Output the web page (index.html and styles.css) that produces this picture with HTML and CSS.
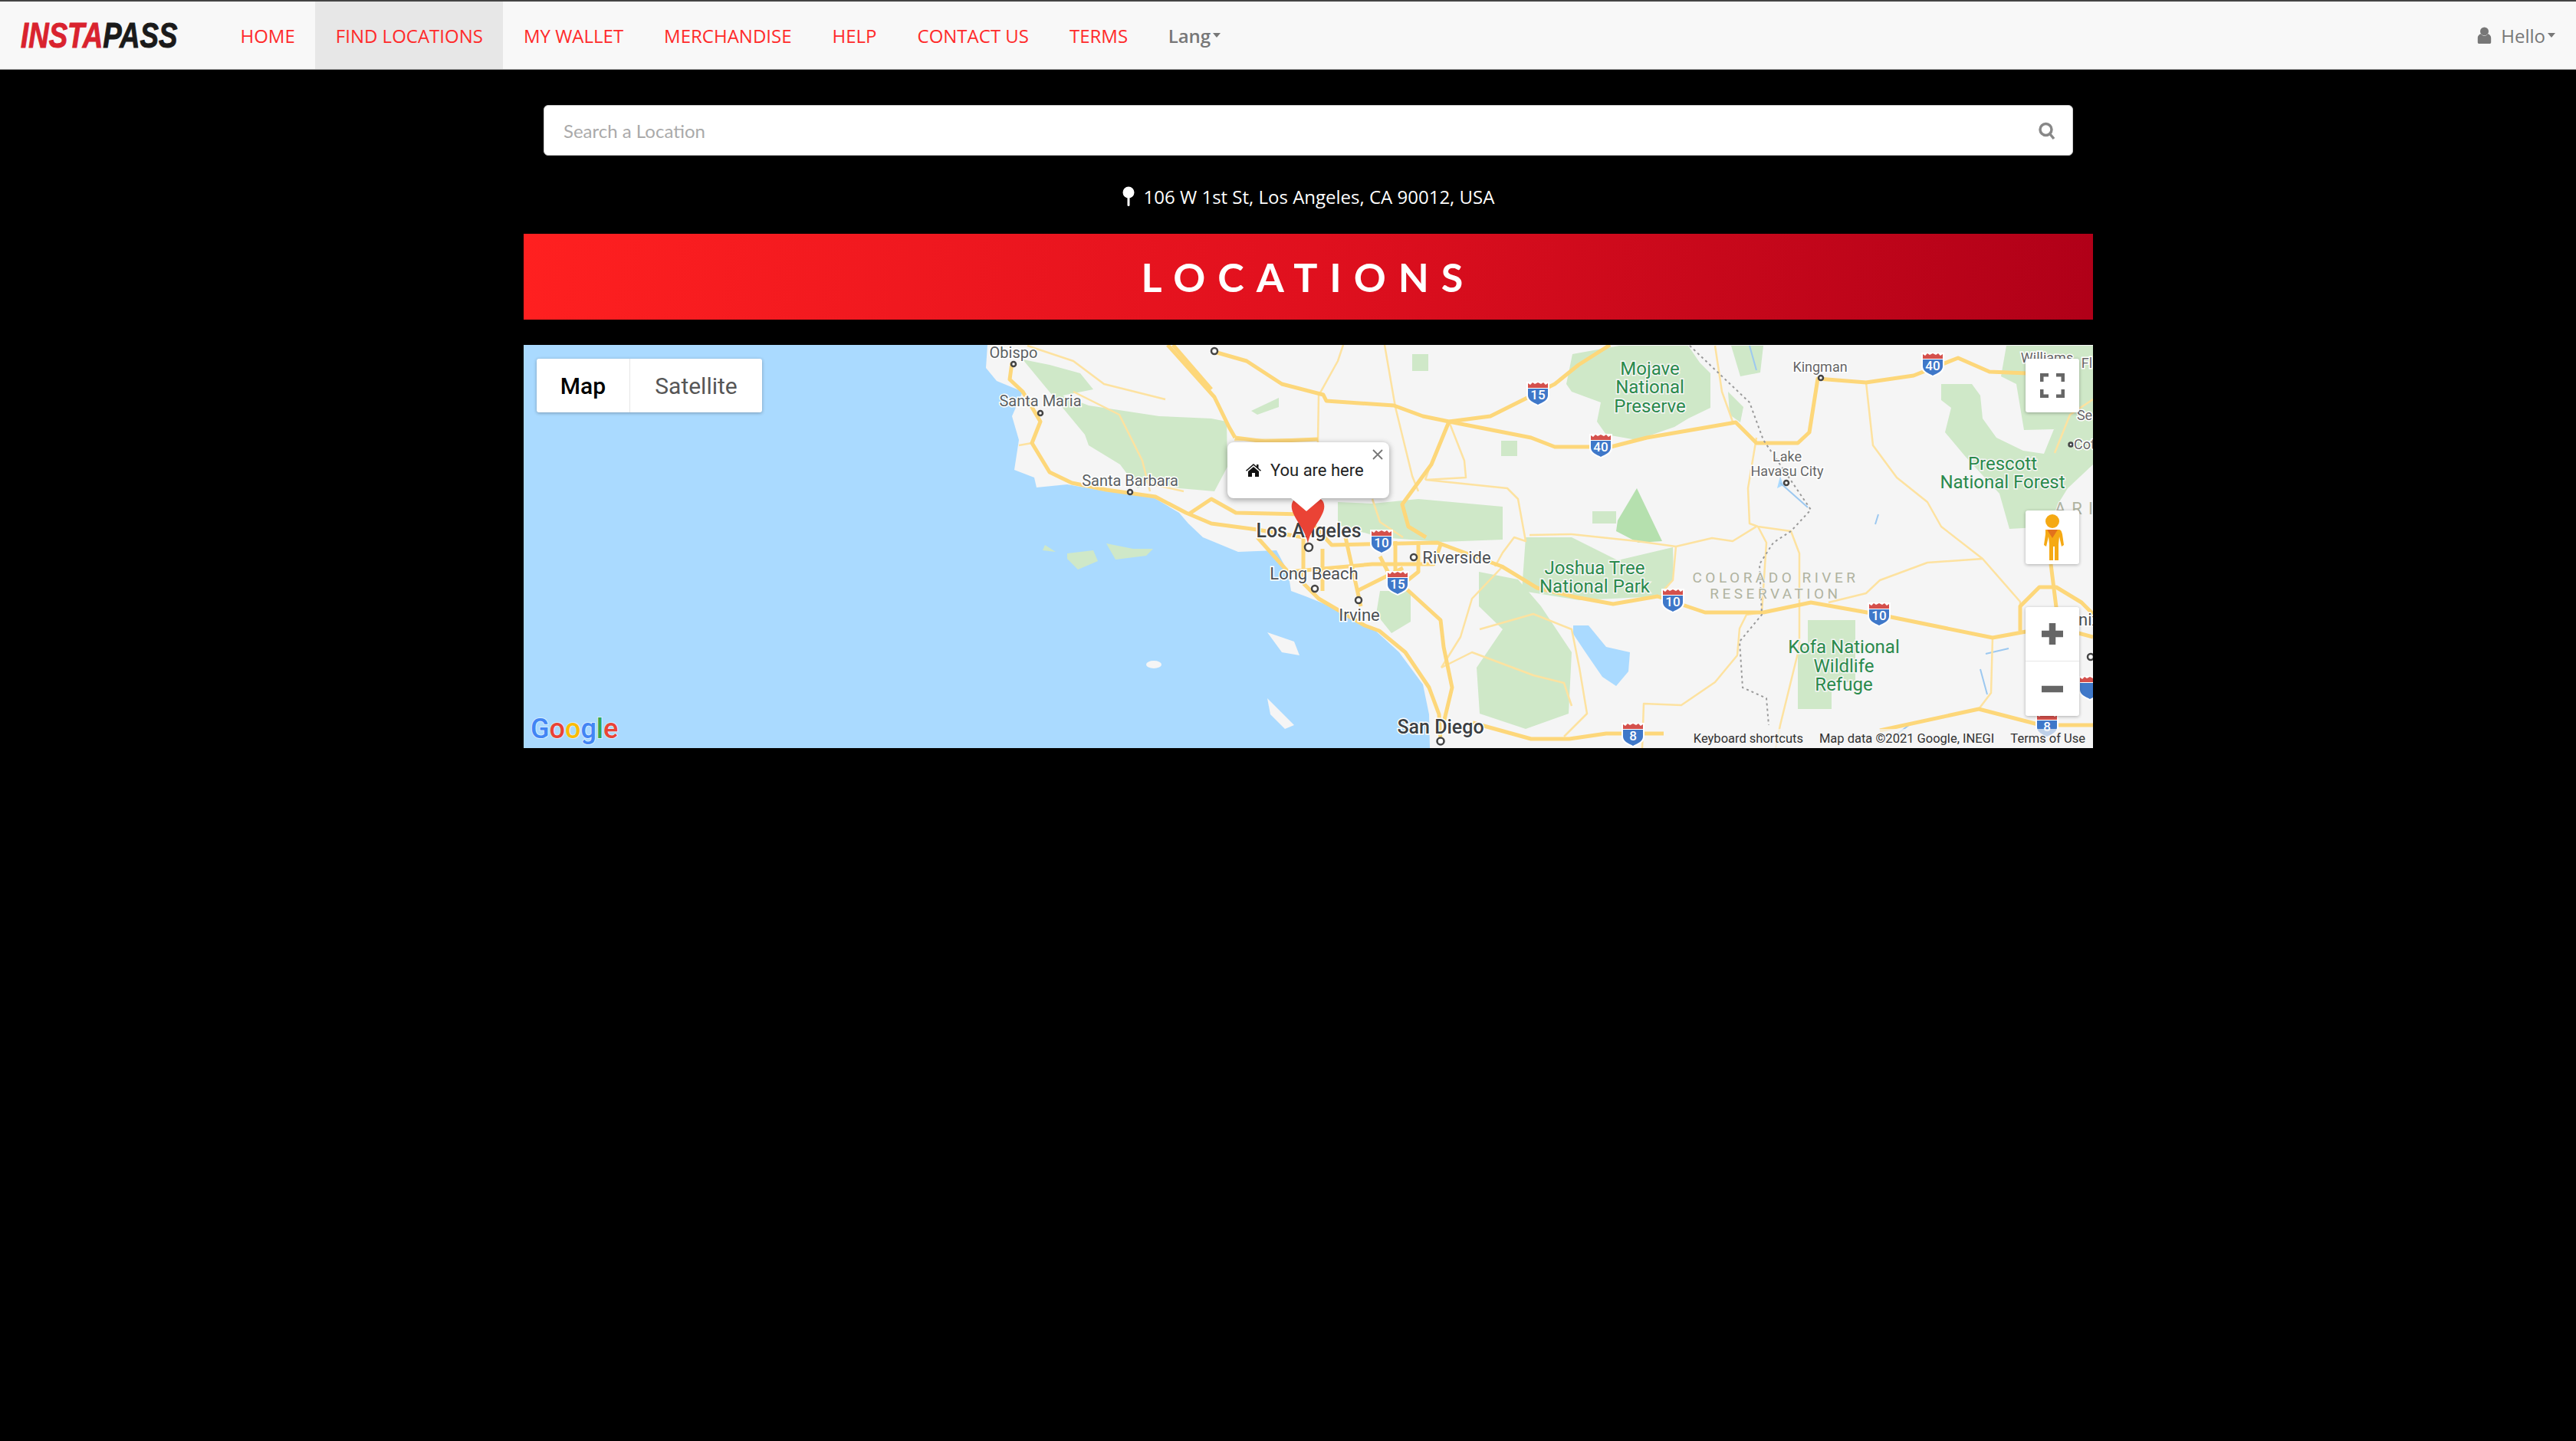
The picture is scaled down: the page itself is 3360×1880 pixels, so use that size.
FILE: index.html
```html
<!DOCTYPE html>
<html lang="en">
<head>
  <meta charset="UTF-8">
  <title>Locations - InstaPass</title>
  <link rel="stylesheet" href="styles.css">
</head>
<body>
  <header class="navbar">
    <a class="brand" href="#"><span class="brand-text"><span class="brand-red">INSTA</span>PASS</span></a>
    <nav class="nav-links">
      <a href="#">HOME</a>
      <a href="#" class="active">FIND LOCATIONS</a>
      <a href="#">MY WALLET</a>
      <a href="#">MERCHANDISE</a>
      <a href="#">HELP</a>
      <a href="#">CONTACT US</a>
      <a href="#">TERMS</a>
      <a href="#" class="dropdown lang">Lang<span class="caret"></span></a>
    </nav>
    <a href="#" class="dropdown user">
      <svg class="user-icon" viewBox="0 0 19 24"><circle cx="9.5" cy="6.5" r="6"/><path d="M0 22v-6c0-4 3-6 5-6 1 2 3 3 4.500 3s3.500-1 4.500-3c2 0 5 2 5 6v6c0 1-1 2-2 2H2c-1 0-2-1-2-2z"/></svg>
      Hello<span class="caret"></span>
    </a>
  </header>

  <main class="container">
    <div class="search-box">
      <input type="text" placeholder="Search a Location">
      <svg class="search-icon" viewBox="0 0 22 24"><circle cx="9.500" cy="10" r="7.500"/><path d="M15 16l5 6"/></svg>
    </div>

    <p class="address">
      <svg class="pin-icon" viewBox="0 0 16 26"><circle cx="8" cy="8" r="7.500"/><rect x="6.500" y="14" width="3" height="12" rx="1.500"/></svg>
      106 W 1st St, Los Angeles, CA 90012, USA
    </p>

    <h1 class="banner">LOCATIONS</h1>

    <section class="map">
      <svg class="map-canvas" viewBox="683 449 2047 526">
        <defs>
          <g id="shield">
            <path fill="#fff" d="M-15-15H15V4C15 10 7 14 0 17C-7 14-15 10-15 4Z"/>
            <path fill="#d4504c" d="M-13-7V-13l3 2 3-3 3 2 4-2 4 2 3-2 3 3 3-2V-7Z"/>
            <path fill="#3f78c9" d="M-13-6H13V3C13 9 6 12 0 15C-6 12-13 9-13 3Z"/>
          </g>
        </defs>

        <rect class="sea" x="683" y="449" width="2047" height="526"/>
        <polygon class="land" points="1288,449 1286,479 1300,496 1334,510 1320,542 1329,573 1323,612 1349,622 1352,635 1392,631 1443,640 1501,646 1538,668 1550,682 1569,700 1615,719 1665,717 1680,745 1684,770 1703,777 1745,794 1791,819 1825,850 1856,892 1864,931 1865,975 2730,975 2730,449"/>

        <!-- islands -->
        <polygon class="park" points="1363,710 1377,719 1360,717"/>
        <polygon class="park" points="1392,721 1426,717 1432,731 1406,742 1392,728"/>
        <polygon class="park" points="1443,708 1478,715 1504,715 1495,724 1455,729"/>
        <ellipse class="land" cx="1505" cy="866" rx="10" ry="5"/>
        <polygon class="land" points="1653,824 1688,836 1695,854 1672,850"/>
        <polygon class="land" points="1653,910 1688,945 1676,950 1657,931"/>

        <!-- parks -->
        <polygon class="park" points="1334,468 1369,475 1409,486 1426,507 1386,515 1420,528 1512,542 1580,545 1600,549 1601,608 1584,640 1538,636 1500,626 1484,636 1461,605 1420,580 1415,566"/>
        <polygon class="park" points="1745,654 1790,656 1850,650 1960,660 1960,703 1880,706 1800,700 1745,684"/>
        <polygon class="park" points="2043,500 2051,461 2112,450 2202,450 2217,472 2231,486 2231,531 2202,545 2184,556 2135,573 2095,566 2083,549 2088,524 2050,510"/>
        <polygon class="park" points="1990,700 2050,700 2110,730 2182,713 2183,755 2166,777 2060,782 1985,770"/>
        <polygon class="park" points="1929,745 1980,755 2010,790 2050,850 2046,930 1990,950 1930,930 1926,870 1960,820 1929,790"/>
        <polygon class="park" points="1800,770 1840,770 1840,810 1815,825 1795,800"/>
        <polygon class="park" points="2532,500 2572,500 2583,515 2586,545 2604,570 2639,587 2666,591 2679,559 2720,542 2730,545 2730,605 2697,636 2684,657 2675,686 2621,689 2608,643 2563,594 2537,563 2545,531 2532,521"/>
        <polygon class="park" points="2617,450 2730,450 2730,545 2679,559 2640,560 2630,500 2610,490"/>
        <polygon class="park" points="2358,808 2420,808 2420,889 2389,889 2389,924 2345,924 2345,843 2358,843"/>
        <polygon class="park" points="2258,450 2300,450 2296,485 2270,490"/>
        <polygon class="park" points="2254,510 2274,530 2270,550 2256,540"/>
        <rect class="park" x="1842" y="461" width="21" height="22"/>
        <rect class="park" x="1958" y="574" width="21" height="20"/>
        <rect class="park" x="2077" y="666" width="31" height="16"/>
        <polygon class="park" points="1632,535 1668,518 1668,530 1640,540"/>
        <polygon class="park-dark" points="2110,678 2135,636 2168,705 2137,707 2108,692"/>

        <!-- water -->
        <polygon class="sea" points="2052,815 2072,815 2095,843 2126,850 2124,875 2108,894 2090,882 2068,850 2052,826"/>
        <polygon class="sea" points="2322,620 2326,632 2318,636"/>
        <path class="river" d="M2282 450L2291 482M2322 629L2358 661M2450 670L2446 683M2583 872L2592 905M2620 845L2590 852M2470 960L2490 945"/>

        <!-- roads -->
        <polyline class="road-thin" points="2237,450 2246,510 2260,549"/>
        <polyline class="road-thin" points="2291,570 2280,636 2282,682 2293,686 2336,692 2347,721 2347,843 2322,945 2316,975"/>
        <polyline class="road-thin" points="2293,686 2304,707 2298,798 2278,801 2269,819 2266,854 2237,889 2193,919 2144,917 2142,975"/>
        <polyline class="road-thin" points="2050,696 2135,705 2186,712 2233,701 2260,705 2291,686"/>
        <polyline class="road-thin" points="2186,712 2182,756 2166,773"/>
        <polyline class="road-thin" points="2434,498 2443,580 2474,622 2514,654 2532,686 2586,728 2635,784 2635,822"/>
        <polyline class="road-thin" points="2385,785 2434,773 2452,756 2514,733 2586,728"/>
        <polyline class="road-thin" points="2599,831 2597,903 2581,924"/>
        <polyline class="road-thin" points="1806,449 1820,530 1842,620 1850,640"/>
        <polyline class="road-thin" points="1720,515 1745,470 1752,449"/>
        <polyline class="road-thin" points="1720,515 1719,575 1719,620"/>
        <polyline class="road-thin" points="1890,549 1910,600 1912,622 1860,625 1966,636 1980,650 1990,705 1975,700 1960,720 1950,738"/>
        <polyline class="road-thin" points="1610,573 1719,572"/>
        <polyline class="road-thin" points="1859,625 1866,605"/>
        <polyline class="road-thin" points="1995,697 2050,696"/>
        <polyline class="road-thin" points="1329,580 1346,577 1369,615 1398,629"/>
        <polyline class="road-thin" points="1400,510 1460,540 1490,600 1500,640"/>
        <polyline class="road-thin" points="1500,630 1544,640"/>
        <polyline class="road-thin" points="1340,450 1400,470 1440,500 1520,520"/>
        <polyline class="road-thin" points="1930,820 2000,800 2050,820 2060,870 2070,930 2040,960"/>
        <polyline class="road-thin" points="1880,870 1920,850 2000,880 2040,890 2050,920"/>
        <polyline class="road-thin" points="1830,700 1800,680 1790,650"/>
        <polyline class="road-thin" points="1960,738 1920,780 1905,830 1880,870"/>
        <polyline class="road" points="1523,449 1584,517 1603,556 1611,570"/>
        <polyline class="road" points="1584,458 1626,470 1672,500 1726,514 1730,522 1818,528 1856,542 1890,549 1944,542 1994,517 2028,500 2059,475 2100,449"/>
        <polyline class="road" points="1890,549 1997,570 2028,582 2101,582 2148,570 2264,550 2291,577 2345,577 2360,563 2371,493 2434,498 2496,489 2554,466 2595,484 2644,486"/>
        <polyline class="road" points="1890,549 1867,605 1829,657 1837,686 1860,700"/>
        <polyline class="road" points="1320,472 1317,494 1334,510 1357,549 1346,577 1369,615 1398,629 1443,638 1507,647 1547,668 1580,682 1640,690 1700,700"/>
        <polyline class="road" points="1530,449 1580,507"/>
        <polyline class="road" points="1611,570 1650,575 1719,572"/>
        <polyline class="road" points="1550,670 1580,650 1612,668 1700,670 1737,710 1875,707 1959,738 2005,766 2055,778 2104,787 2162,777 2224,798 2300,798 2362,785 2452,801 2599,831 2648,822"/>
        <polyline class="road" points="1640,700 1680,745"/>
        <polyline class="road" points="1700,700 1700,760 1720,780 1780,815 1799,822 1833,850 1864,896 1877,931 1879,966"/>
        <polyline class="road" points="1833,766 1879,808 1883,843 1894,896 1883,942"/>
        <polyline class="road" points="1725,715 1725,770"/>
        <polyline class="road" points="1680,745 1790,735 1870,735 1880,707"/>
        <polyline class="road" points="1755,700 1775,790"/>
        <polyline class="road" points="1800,725 1818,760"/>
        <polyline class="road" points="1820,705 1820,770"/>
        <polyline class="road" points="1850,705 1850,745 1825,765"/>
        <polyline class="road" points="1770,770 1830,740"/>
        <polyline class="road" points="1921,942 1997,963 2047,963 2095,956 2170,956"/>
        <polyline class="road" points="2452,952 2581,924 2662,945 2730,945"/>
        <polyline class="road" points="2635,822 2635,790 2660,765 2682,765 2715,785 2730,800"/>
        <polyline class="road" points="2675,735 2682,791 2690,860"/>
        <polyline class="road" points="2648,822 2700,822 2730,830"/>
        <polyline class="road-thin" points="2680,590 2700,540 2730,520"/>

        <!-- state line -->
        <polyline class="border" points="2204,450 2282,524 2300,573 2362,664 2336,692 2313,707 2295,735 2298,801 2269,836 2273,896 2304,910 2307,945"/>

        <!-- shields -->
        <use href="#shield" x="2006" y="512"/><text class="shield-num" x="2006" y="520">15</text>
        <use href="#shield" x="2088" y="580"/><text class="shield-num" x="2088" y="588">40</text>
        <use href="#shield" x="1802" y="705"/><text class="shield-num" x="1802" y="713">10</text>
        <use href="#shield" x="1823" y="759"/><text class="shield-num" x="1823" y="767">15</text>
        <use href="#shield" x="2521" y="474"/><text class="shield-num" x="2521" y="482">40</text>
        <use href="#shield" x="2182" y="782"/><text class="shield-num" x="2182" y="790">10</text>
        <use href="#shield" x="2451" y="800"/><text class="shield-num" x="2451" y="808">10</text>
        <use href="#shield" x="2130" y="957"/><text class="shield-num" x="2130" y="965">8</text>
        <use href="#shield" x="2670" y="945"/><text class="shield-num" x="2670" y="953">8</text>
        <use href="#shield" x="2726" y="896"/>

        <!-- city dots -->
        <circle class="dot" cx="1322" cy="474" r="3"/>
        <circle class="dot" cx="1357" cy="538" r="3"/>
        <circle class="dot" cx="1474" cy="641" r="3"/>
        <circle class="dot" cx="1584" cy="457" r="4"/>
        <circle class="dot" cx="1715" cy="767" r="4"/>
        <circle class="dot" cx="1772" cy="782" r="4"/>
        <circle class="dot" cx="1844" cy="726" r="4"/>
        <circle class="dot" cx="1879" cy="966" r="4.500"/>
        <circle class="dot" cx="2375" cy="492" r="3"/>
        <circle class="dot" cx="2330" cy="629" r="3"/>
        <circle class="dot" cx="2701" cy="579" r="2.500"/>
        <circle class="dot" cx="2727" cy="856" r="4"/>
        <circle class="dot" cx="1707" cy="713" r="5"/>

        <!-- labels -->
        <text class="city" x="1322" y="466">Obispo</text>
        <text class="city" x="1357" y="529">Santa Maria</text>
        <text class="city" x="1474" y="633">Santa Barbara</text>
        <text class="city big" x="1707" y="700">Los Angeles</text>
        <text class="city mid" x="1714" y="755">Long Beach</text>
        <text class="city mid" x="1773" y="809">Irvine</text>
        <text class="city mid" x="1900" y="734">Riverside</text>
        <text class="city big" x="1879" y="956">San Diego</text>
        <text class="city small" x="2374" y="484">Kingman</text>
        <text class="city small" x="2331" y="601">Lake</text>
        <text class="city small" x="2331" y="620">Havasu City</text>
        <text class="city small" x="2670" y="472">Williams</text>
        <text class="city small" x="2722" y="479">Fl</text>
        <text class="city small" x="2719" y="547">Se</text>
        <text class="city small start" x="2705" y="585">Cot</text>
        <text class="city mid start" x="2711" y="815">nix</text>
        <text class="green" x="2152" y="488">Mojave</text>
        <text class="green" x="2152" y="512">National</text>
        <text class="green" x="2152" y="537">Preserve</text>
        <text class="green" x="2080" y="748">Joshua Tree</text>
        <text class="green" x="2080" y="772">National Park</text>
        <text class="green" x="2612" y="612">Prescott</text>
        <text class="green" x="2612" y="636">National Forest</text>
        <text class="green" x="2405" y="851">Kofa National</text>
        <text class="green" x="2405" y="876">Wildlife</text>
        <text class="green" x="2405" y="900">Refuge</text>
        <text class="region" x="2316" y="759">COLORADO RIVER</text>
        <text class="region" x="2316" y="780">RESERVATION</text>
        <text class="region state" x="2680" y="670">ARI</text>

        <!-- logo -->
        <text class="google" x="692" y="962"><tspan fill="#4285f4">G</tspan><tspan fill="#ea4335">o</tspan><tspan fill="#fbbc05">o</tspan><tspan fill="#4285f4">g</tspan><tspan fill="#34a853">l</tspan><tspan fill="#ea4335">e</tspan></text>
      </svg>

      <div class="map-type">
        <button class="active">Map</button>
        <button>Satellite</button>
      </div>

      <button class="map-btn fullscreen">
        <svg viewBox="0 0 32 32"><path d="M2 11V2H11M21 2H30V11M30 21V30H21M11 30H2V21"/></svg>
      </button>
      <button class="map-btn pegman">
        <svg viewBox="0 0 30 60"><circle cx="15" cy="9" r="9" fill="#f5a914"/><path fill="#f5a914" d="M6 20h18c2 0 3 2 4 6l2 14-3 2-3-13-1 10v21h-5V42h-2v18H11V39L10 29 7 42l-3-2 2-14c0-3 0-6 0-6z"/><path fill="#e2711d" d="M8 20h14l-7 11z"/></svg>
      </button>
      <div class="map-zoom">
        <button><svg viewBox="0 0 32 32"><path d="M16 2V30M2 16H30"/></svg></button>
        <button><svg viewBox="0 0 32 32"><path d="M2 16H30"/></svg></button>
      </div>

      <div class="attribution">
        <span>Keyboard shortcuts</span>
        <span>Map data ©2021 Google, INEGI</span>
        <span>Terms of Use</span>
      </div>

      <svg class="marker" viewBox="0 0 44 64"><path fill="#ea4335" d="M22 62C20 44 0 26 0 12 0 4 6 0 11 0h22c5 0 11 4 11 12 0 14-20 32-22 50z"/></svg>
      <div class="info-window">
        <svg class="home-icon" viewBox="0 0 20 17"><path d="M10 0l4 3.500V1h2.500v4.700L20 8.700l-1 1.100L10 2 1 9.800 0 8.700zM3 10l7-6 7 6v7h-5v-5H8v5H3z"/></svg>
        You are here
        <svg class="close-icon" viewBox="0 0 14 14"><path d="M1 1L13 13M13 1L1 13"/></svg>
      </div>
    </section>
  </main>
</body>
</html>
```

FILE: styles.css
```css
body {
  margin: 0;
  background-color: #000;
  font-family: 'Open Sans', sans-serif;
}
a {
  text-decoration: none;
}

/* top bar */
.navbar {
  display: flex;
  align-items: stretch;
  height: 88px;
  background-color: #f8f8f8;
  border-top: 2px solid #444;
  border-bottom: 1px solid #aaa;
}
.brand {
  display: flex;
  align-items: center;
  width: 260px;
  margin-left: 27px;
  flex-shrink: 0;
}
.brand-text {
  display: inline-block;
  font-family: 'Liberation Sans', sans-serif;
  font-size: 47px;
  font-weight: 700;
  font-style: italic;
  line-height: 36px;
  color: #1a1a1a;
  -webkit-text-stroke: 1px currentColor;
  transform: scaleX(0.78);
  transform-origin: left center;
  white-space: nowrap;
}
.brand-red {
  color: #d9232e;
}
.nav-links {
  display: flex;
}
.nav-links a {
  display: flex;
  align-items: center;
  padding: 0 26.500px;
  font-size: 24px;
  color: #ff2a2a;
}
.nav-links a.active {
  background-color: #e7e7e7;
}
.nav-links a.lang {
  font-weight: 600;
  color: #777;
  padding-left: 26px;
}
.caret {
  display: inline-block;
  margin-left: 3px;
  border-top: 6px solid currentColor;
  border-left: 5.500px solid transparent;
  border-right: 5.500px solid transparent;
}
.user {
  display: flex;
  align-items: center;
  margin-left: auto;
  padding-right: 27px;
  font-size: 24px;
  color: #777;
}
.user-icon {
  width: 19px;
  height: 22px;
  margin-right: 12px;
  fill: #777;
}

/* page */
.container {
  width: 2047px;
  margin-left: 683px;
}
.search-box {
  position: relative;
  margin: 46px 26px 0;
}
.search-box input {
  display: block;
  box-sizing: border-box;
  width: 100%;
  height: 66px;
  padding: 0 25px;
  background-color: #fff;
  border: 1px solid #ccc;
  border-radius: 6px;
  font-family: 'Lato', sans-serif;
  font-size: 24px;
}
.search-box input::placeholder {
  color: #aaa;
}
.search-icon {
  position: absolute;
  top: 22px;
  right: 23px;
  width: 22px;
  height: 24px;
  fill: none;
  stroke: #888;
  stroke-width: 3.500;
}
.address {
  display: flex;
  justify-content: center;
  align-items: center;
  gap: 12px;
  height: 34px;
  margin: 36px 0 32px;
  font-size: 24px;
  color: #fff;
}
.pin-icon {
  width: 16px;
  height: 26px;
  fill: #fff;
}
.banner {
  height: 112px;
  margin: 0 0 33px;
  background: linear-gradient(100deg, #ff2020 0%, #e0101e 50%, #b00018 100%);
  font-family: 'Lato', sans-serif;
  font-size: 52px;
  font-weight: 700;
  line-height: 112px;
  letter-spacing: 16px;
  text-align: center;
  color: #fff;
}

/* map */
.map {
  position: relative;
  height: 526px;
  overflow: hidden;
  font-family: 'Roboto', sans-serif;
}
.map-canvas {
  display: block;
  width: 2047px;
  height: 526px;
}
.sea { fill: #aadaff; }
.land { fill: #f5f5f5; }
.park { fill: #cfe8c8; }
.park-dark { fill: #b5e0ae; }
.river { fill: none; stroke: #9cc8f0; stroke-width: 2; }
.road { fill: none; stroke: #fdd77a; stroke-width: 5; stroke-linejoin: round; }
.road-thin { fill: none; stroke: #fde2a0; stroke-width: 2.500; stroke-linejoin: round; }
.border { fill: none; stroke: #9a9a9a; stroke-width: 2; stroke-dasharray: 3 4; }
.dot { fill: #fff; stroke: #444; stroke-width: 2.500; }
.city, .green, .region, .shield-num {
  text-anchor: middle;
  paint-order: stroke;
}
.city {
  font-size: 20px;
  fill: #5b5f63;
  stroke: #fff;
  stroke-width: 3px;
}
.city.big { font-size: 25px; font-weight: 500; fill: #3c4043; }
.city.mid { font-size: 22px; fill: #4c5054; }
.city.small { font-size: 18px; fill: #666; }
.city.start { text-anchor: start; }
.green {
  font-size: 24px;
  fill: #2a8a4c;
  stroke: #f5f5f5;
  stroke-width: 3px;
}
.region {
  font-size: 19px;
  letter-spacing: 4.500px;
  fill: #b0b3a0;
  stroke: #f5f5f5;
  stroke-width: 2px;
}
.region.state { text-anchor: start; font-size: 22px; letter-spacing: 8px; }
.shield-num {
  font-size: 17px;
  font-weight: 500;
  fill: #fff;
}
.google {
  font-size: 36px;
  font-weight: 500;
  stroke: #fff;
  stroke-width: 2px;
  stroke-opacity: 0.5;
  paint-order: stroke;
}

.map-type {
  position: absolute;
  top: 18px;
  left: 17px;
  display: flex;
  background-color: #fff;
  border-radius: 3px;
  box-shadow: 0 1px 4px rgba(0, 0, 0, 0.3);
}
.map-type button {
  height: 70px;
  padding: 0;
  background: none;
  border: none;
  font-family: 'Roboto', sans-serif;
  font-size: 30px;
  color: #565656;
}
.map-type button.active {
  width: 122px;
  border-right: 1px solid #e6e6e6;
  font-weight: 500;
  color: #000;
}
.map-type button:last-child {
  width: 172px;
}
.map-btn {
  position: absolute;
  left: 1959px;
  width: 70px;
  height: 70px;
  padding: 0;
  background-color: #fff;
  border: none;
  border-radius: 3px;
  box-shadow: 0 1px 4px rgba(0, 0, 0, 0.3);
}
.map-btn svg {
  display: block;
  margin: 0 auto;
}
.fullscreen { top: 18px; }
.fullscreen svg {
  width: 32px;
  height: 32px;
  fill: none;
  stroke: #666;
  stroke-width: 5;
}
.pegman { top: 216px; }
.pegman svg {
  width: 30px;
  height: 60px;
}
.map-zoom {
  position: absolute;
  top: 342px;
  left: 1959px;
  width: 70px;
  background-color: #fff;
  border-radius: 3px;
  box-shadow: 0 1px 4px rgba(0, 0, 0, 0.3);
}
.map-zoom button {
  display: block;
  width: 70px;
  height: 71px;
  padding: 0;
  background: none;
  border: none;
}
.map-zoom button:first-child {
  border-bottom: 1px solid #e6e6e6;
}
.map-zoom svg {
  display: block;
  width: 32px;
  height: 32px;
  margin: 0 auto;
  fill: none;
  stroke: #666;
  stroke-width: 8.500;
}
.attribution {
  position: absolute;
  right: 0;
  bottom: 0;
  display: flex;
  gap: 21px;
  height: 25px;
  padding: 0 10px 0 8px;
  background-color: rgba(245, 245, 245, 0.7);
  font-size: 16.500px;
  line-height: 25px;
  color: #333;
}

/* you are here popup */
.marker {
  position: absolute;
  top: 199px;
  left: 1001px;
  width: 44px;
  height: 62px;
}
.info-window {
  position: absolute;
  top: 127px;
  left: 918px;
  display: flex;
  align-items: center;
  box-sizing: border-box;
  width: 211px;
  height: 73px;
  padding: 0 0 1px 24px;
  background-color: #fff;
  border-radius: 8px;
  box-shadow: 0 2px 7px 1px rgba(0, 0, 0, 0.3);
  font-size: 22px;
  color: #222;
}
.info-window::after {
  content: "";
  position: absolute;
  top: 73px;
  left: 83px;
  border-top: 17px solid #fff;
  border-left: 20px solid transparent;
  border-right: 20px solid transparent;
}
.home-icon {
  width: 20px;
  height: 17px;
  margin-right: 12px;
  fill: #111;
}
.close-icon {
  position: absolute;
  top: 9px;
  right: 8px;
  width: 14px;
  height: 14px;
  fill: none;
  stroke: #777;
  stroke-width: 1.800;
}
```
